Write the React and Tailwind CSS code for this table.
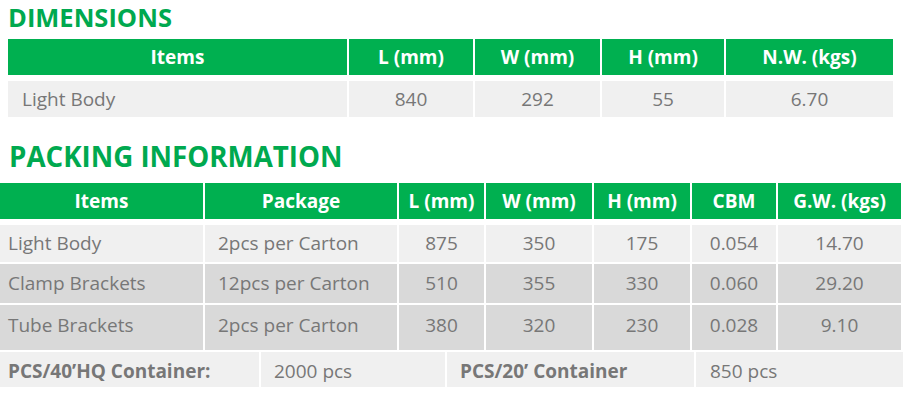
const DIM_COLS = 'grid grid-cols-[339px_124px_125px_122px_167px] gap-x-[2px]';
const PACK_COLS = 'grid grid-cols-[203px_192px_85px_106px_96px_84px_123px] gap-x-[2px]';

const dimHead = ['Items', 'L (mm)', 'W (mm)', 'H (mm)', 'N.W. (kgs)'];
const packHead = ['Items', 'Package', 'L (mm)', 'W (mm)', 'H (mm)', 'CBM', 'G.W. (kgs)'];
const packRows = [
  { cells: ['Light Body', '2pcs per Carton', '875', '350', '175', '0.054', '14.70'], h: 'h-[37px]', bg: 'bg-[#f0f0f0]' },
  { cells: ['Clamp Brackets', '12pcs per Carton', '510', '355', '330', '0.060', '29.20'], h: 'h-[39px]', bg: 'bg-[#d9d9d9]' },
  { cells: ['Tube Brackets', '2pcs per Carton', '380', '320', '230', '0.028', '9.10'], h: 'h-[45px] pb-[4px]', bg: 'bg-[#d9d9d9]' },
];

function HeadCell({ children }) {
  return (
    <div className="h-[36px] bg-[#00b050] flex items-center justify-center text-white font-bold text-[19px]">
      {children}
    </div>
  );
}

export default function App() {
  return (
    <div
      className="w-[905px] h-[403px] bg-white overflow-hidden"
      style={{ fontFamily: '"Open Sans", "Liberation Sans", sans-serif' }}
    >
      <h2 className="h-[39px] pl-[8px] flex items-center text-[#00a94f] font-bold text-[25.5px] leading-none pb-[4px]">
        DIMENSIONS
      </h2>

      <div className="ml-[8px]">
        <div className={DIM_COLS}>
          {dimHead.map((h) => <HeadCell key={h}>{h}</HeadCell>)}
        </div>
        <div className={`${DIM_COLS} mt-[6px]`}>
          <div className="h-[36px] bg-[#f0f0f0] flex items-center pl-[14px] text-[#777] text-[19px]">Light Body</div>
          {['840', '292', '55', '6.70'].map((v) => (
            <div key={v} className="h-[36px] bg-[#f0f0f0] flex items-center justify-center text-[#777] text-[19px]">{v}</div>
          ))}
        </div>
      </div>

      <h2 className="h-[66px] pl-[9px] flex items-end pb-[12px] text-[#00a94f] font-bold text-[27.7px] leading-none">
        PACKING INFORMATION
      </h2>

      <div className={PACK_COLS}>
        {packHead.map((h) => <HeadCell key={h}>{h}</HeadCell>)}
      </div>
      <div className="flex flex-col gap-[2px] mt-[6px]">
        {packRows.map(({ cells, h, bg }) => (
          <div key={cells[0]} className={PACK_COLS}>
            {cells.map((c, i) => (
              <div
                key={i}
                className={`${h} ${bg} flex items-center text-[#777] text-[19px] ${
                  i === 0 ? 'pl-[8px]' : i === 1 ? 'pl-[13px]' : 'justify-center'
                }`}
              >
                {c}
              </div>
            ))}
          </div>
        ))}
      </div>

      <div className="grid grid-cols-[259px_184px_247px_207px] gap-x-[2px] mt-[2px] text-[19px] text-[#777]">
        <div className="h-[35px] bg-[#f0f0f0] flex items-center pl-[8px] pt-[3px] font-bold">PCS/40’HQ Container:</div>
        <div className="h-[35px] bg-[#f0f0f0] flex items-center pl-[13px] pt-[3px]">2000 pcs</div>
        <div className="h-[35px] bg-[#f0f0f0] flex items-center pl-[13px] pt-[3px] font-bold">PCS/20’ Container</div>
        <div className="h-[35px] bg-[#f0f0f0] flex items-center pl-[14px] pt-[3px]">850 pcs</div>
      </div>
    </div>
  );
}
